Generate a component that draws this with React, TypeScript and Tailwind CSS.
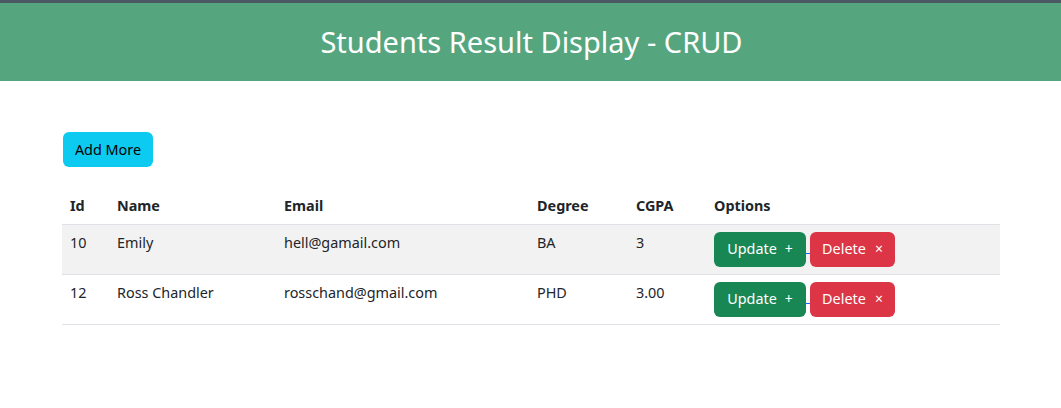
const STUDENTS = [
  { id: 10, name: 'Emily', email: 'hell@gamail.com', degree: 'BA', cgpa: '3' },
  { id: 12, name: 'Ross Chandler', email: 'rosschand@gmail.com', degree: 'PHD', cgpa: '3.00' },
];

export default function App() {
  return (
    <div className="min-h-[408px] bg-white text-[#212529] font-['Noto_Sans',sans-serif]">
      {/* Header */}
      <div className="h-[3px] bg-[#4a5a64]" />
      <div className="h-[78px] bg-[#55a67e] flex items-center justify-center">
        <h2 className="text-[29px] leading-none text-white pb-[1px] pl-[2px]">Students Result Display - CRUD</h2>
      </div>

      <div className="w-[938px] ml-[62px] pt-[51px]">
        <button className="h-[35px] w-[90px] rounded-[6px] bg-[#0dcaf0] text-black text-[14.4px] leading-[21.6px] ml-px">
          Add More
        </button>

        <table className="w-full table-fixed mt-[21px] text-[14.4px] leading-[21.6px] border-collapse">
          <colgroup>
            <col className="w-[47px]" />
            <col className="w-[167px]" />
            <col className="w-[253px]" />
            <col className="w-[99px]" />
            <col className="w-[78px]" />
            <col />
          </colgroup>
          <thead>
            <tr className="border-b border-[#dee2e6]">
              <th className="text-left font-bold px-2 py-[7px]">Id</th>
              <th className="text-left font-bold px-2 py-[7px]">Name</th>
              <th className="text-left font-bold px-2 py-[7px]">Email</th>
              <th className="text-left font-bold px-2 py-[7px]">Degree</th>
              <th className="text-left font-bold px-2 py-[7px]">CGPA</th>
              <th className="text-left font-bold px-2 py-[7px]">Options</th>
            </tr>
          </thead>
          <tbody>
            {STUDENTS.map((s, i) => (
              <tr
                key={s.id}
                className={`border-b border-[#dee2e6] align-top ${i % 2 === 0 ? 'bg-[#f2f2f2]' : 'bg-white'}`}
              >
                <td className="px-2 pt-[7px]">{s.id}</td>
                <td className="px-2 pt-[7px]">{s.name}</td>
                <td className="px-2 pt-[7px]">{s.email}</td>
                <td className="px-2 pt-[7px]">{s.degree}</td>
                <td className="px-2 pt-[7px]">{s.cgpa}</td>
                <td className="px-2 pt-[7px] pb-[7px]">
                  <div className="flex items-center">
                    <button className="h-[35px] w-[92px] rounded-[6px] bg-[#198754] text-white flex items-center justify-center">
                      Update<span className="ml-[8px] text-[14px]">+</span>
                    </button>
                    <span className="w-[4px] h-[1px] bg-[#0d6efd] mt-[8px]" />
                    <button className="h-[35px] w-[85px] rounded-[6px] bg-[#dc3545] text-white flex items-center justify-center">
                      Delete<span className="ml-[9px] text-[14px]">×</span>
                    </button>
                  </div>
                </td>
              </tr>
            ))}
          </tbody>
        </table>
      </div>
    </div>
  );
}
